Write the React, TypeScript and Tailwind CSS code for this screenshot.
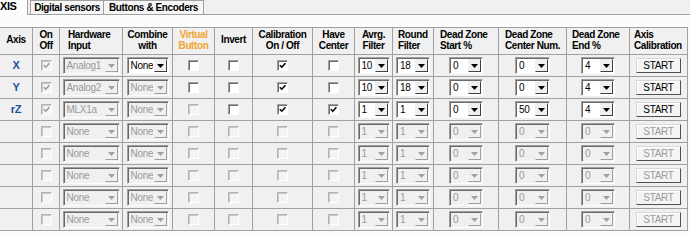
import React from 'react';

type Row = {
  axis?: string;
  on: boolean;
  hw: string;
  combine: string;
  combineOn: boolean;
  virtualOn: boolean;
  invertOn: boolean;
  calib: boolean;
  center: boolean;
  active: boolean;
  avrg: string;
  round: string;
  dzStart: string;
  dzCenter: string;
  dzEnd: string;
};

const empty: Row = {
  on: false,
  hw: 'None',
  combine: 'None',
  combineOn: false,
  virtualOn: false,
  invertOn: false,
  calib: false,
  center: false,
  active: false,
  avrg: '1',
  round: '1',
  dzStart: '0',
  dzCenter: '0',
  dzEnd: '0',
};

const rows: Row[] = [
  { axis: 'X', on: true, hw: 'Analog1', combine: 'None', combineOn: true, virtualOn: true, invertOn: true, calib: true, center: false, active: true, avrg: '10', round: '18', dzStart: '0', dzCenter: '0', dzEnd: '4' },
  { axis: 'Y', on: true, hw: 'Analog2', combine: 'None', combineOn: false, virtualOn: true, invertOn: true, calib: true, center: false, active: true, avrg: '10', round: '18', dzStart: '0', dzCenter: '0', dzEnd: '4' },
  { axis: 'rZ', on: true, hw: 'MLX1a', combine: 'None', combineOn: false, virtualOn: false, invertOn: true, calib: true, center: true, active: true, avrg: '1', round: '1', dzStart: '0', dzCenter: '50', dzEnd: '4' },
  empty,
  empty,
  empty,
  empty,
  empty,
];

const headers: { lines: string[]; cls: string }[] = [
  { lines: ['Axis'], cls: 'text-center pt-[6px]' },
  { lines: ['On', 'Off'], cls: 'text-center' },
  { lines: ['Hardware', 'Input'], cls: 'pl-[8px]' },
  { lines: ['Combine', 'with'], cls: 'text-center' },
  { lines: ['Virtual', 'Button'], cls: 'text-center text-[#f2a531]' },
  { lines: ['Invert'], cls: 'text-center pt-[6px]' },
  { lines: ['Calibration', 'On / Off'], cls: 'text-center' },
  { lines: ['Have', 'Center'], cls: 'text-center' },
  { lines: ['Avrg.', 'Filter'], cls: 'text-center' },
  { lines: ['Round', 'Filter'], cls: 'pl-[5px]' },
  { lines: ['Dead Zone', 'Start %'], cls: 'pl-[6px]' },
  { lines: ['Dead Zone', 'Center Num.'], cls: 'pl-[6px]' },
  { lines: ['Dead Zone', 'End %'], cls: 'pl-[5px]' },
  { lines: ['Axis', 'Calibration'], cls: 'pl-[4px]' },
];

function Check({ checked, enabled }: { checked?: boolean; enabled?: boolean }) {
  return (
    <span
      className={
        enabled
          ? 'flex h-[11px] w-[11px] items-center justify-center border border-t-[#a0a0a0] border-l-[#a0a0a0] border-r-white border-b-white bg-white shadow-[inset_1px_1px_0_#696969]'
          : 'flex h-[11px] w-[11px] items-center justify-center border border-t-[#b4b4b4] border-l-[#b4b4b4] border-r-white border-b-white bg-[#f4f4f4] shadow-[inset_1px_1px_0_#c8c8c8]'
      }
    >
      {checked && (
        <svg width="7" height="7" viewBox="0 0 7 7">
          <path d="M0.8 3.2 L2.8 5.2 L6.4 1.2" fill="none" stroke={enabled ? '#000' : '#9a9a9a'} strokeWidth="1.6" />
        </svg>
      )}
    </span>
  );
}

function Combo({ value, w, enabled }: { value: string; w: string; enabled?: boolean }) {
  return (
    <div
      className={`flex h-[17px] ${w} border border-t-[#a0a0a0] border-l-[#a0a0a0] border-r-white border-b-white shadow-[inset_1px_1px_0_#696969] ${
        enabled ? 'bg-white text-black' : 'bg-[#f0f0f0] text-[#9a9a9a]'
      }`}
    >
      <span className="flex-1 overflow-hidden whitespace-nowrap pl-[3px] leading-[15px]">{value}</span>
      <span
        className={`m-[1px] flex w-[13px] items-center justify-center border bg-[#f0f0f0] ${
          enabled
            ? 'border-t-[#f0f0f0] border-l-[#f0f0f0] border-r-[#404040] border-b-[#404040]'
            : 'border-t-[#f0f0f0] border-l-[#f0f0f0] border-r-[#a0a0a0] border-b-[#a0a0a0]'
        }`}
      >
        <svg width="7" height="4" viewBox="0 0 7 4">
          <polygon points="0,0 7,0 3.5,4" fill={enabled ? '#000' : '#a0a0a0'} />
        </svg>
      </span>
    </div>
  );
}

function StartButton({ enabled }: { enabled?: boolean }) {
  return (
    <div
      className={`flex h-[15px] w-[45px] items-center justify-center border border-t-[#d8d8d8] border-l-[#d8d8d8] border-r-[#505050] border-b-[#505050] bg-[#f4f4f4] leading-none shadow-[inset_1px_1px_0_#ffffff] ${
        enabled ? 'text-black' : 'text-[#9a9a9a]'
      }`}
    >
      START
    </div>
  );
}

const cell = 'flex h-[22px] items-center justify-center border-r border-b border-[#a0a0a0]';

export default function App() {
  return (
    <div
      className="h-[235px] w-[690px] overflow-hidden bg-[#fcfcfc] text-[10px] tracking-[-0.3px] text-black"
      style={{ fontFamily: '"Liberation Sans", Arial, sans-serif' }}
    >
      {/* tabs */}
      <div className="flex h-[15px] bg-[#f0f0f0]">
        <div className="h-[15px] w-[28px] border-r border-[#a0a0a0] bg-[#fcfcfc] text-[11px] font-bold leading-[13px] tracking-[-0.4px]">
          XIS
        </div>
        <div className="flex flex-1 items-end border-b border-[#a0a0a0] pl-[2px]">
          <div className="flex h-[14px] w-[74px] items-center justify-center border border-b-0 border-[#a0a0a0] bg-[#f6f6f6] font-bold tracking-[-0.4px]">
            Digital sensors
          </div>
          <div className="flex h-[14px] w-[100px] items-center justify-center border border-b-0 border-l-0 border-[#a0a0a0] bg-[#f6f6f6] font-bold tracking-[-0.4px]">
            Buttons &amp; Encoders
          </div>
        </div>
      </div>

      <div className="h-[12px]" />

      {/* axis grid */}
      <div className="grid w-[688px] grid-cols-[33px_27px_63px_50px_42px_38px_60px_42px_38px_41px_65px_68px_63px_58px] border-t border-[#a0a0a0] bg-[#f0f0f0]">
        {headers.map((h, i) => (
          <div
            key={i}
            className={`h-[27px] border-r border-b border-[#a0a0a0] pt-[1px] text-[10px] font-bold leading-[11px] tracking-[-0.4px] whitespace-nowrap ${h.cls}`}
          >
            {h.lines.map((l) => (
              <div key={l}>{l}</div>
            ))}
          </div>
        ))}

        {rows.map((r, i) => (
          <React.Fragment key={i}>
            <div className={`${cell} text-[11px] font-bold text-[#1d4f9f]`}>{r.axis}</div>
            <div className={cell}>
              <Check checked={r.on} />
            </div>
            <div className={cell}>
              <Combo value={r.hw} w="w-[57px]" />
            </div>
            <div className={cell}>
              <Combo value={r.combine} w="w-[42px]" enabled={r.combineOn} />
            </div>
            <div className={cell}>
              <Check enabled={r.virtualOn} />
            </div>
            <div className={cell}>
              <Check enabled={r.invertOn} />
            </div>
            <div className={cell}>
              <Check checked={r.calib} enabled={r.active} />
            </div>
            <div className={cell}>
              <Check checked={r.center} enabled={r.active} />
            </div>
            <div className={cell}>
              <Combo value={r.avrg} w="w-[32px]" enabled={r.active} />
            </div>
            <div className={cell}>
              <Combo value={r.round} w="w-[34px]" enabled={r.active} />
            </div>
            <div className={cell}>
              <Combo value={r.dzStart} w="w-[34px]" enabled={r.active} />
            </div>
            <div className={cell}>
              <Combo value={r.dzCenter} w="w-[35px]" enabled={r.active} />
            </div>
            <div className={cell}>
              <Combo value={r.dzEnd} w="w-[34px]" enabled={r.active} />
            </div>
            <div className={cell}>
              <StartButton enabled={r.active} />
            </div>
          </React.Fragment>
        ))}
      </div>
    </div>
  );
}
